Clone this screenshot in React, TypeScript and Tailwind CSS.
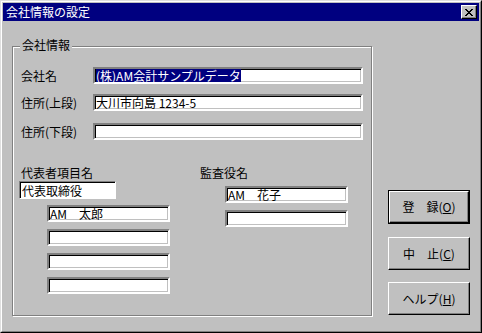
import React from "react";

const font = "font-['Noto_Sans_CJK_JP','Noto_Sans',sans-serif]";

const sunken =
  "bg-white border-2 border-t-[#808080] border-l-[#808080] border-b-white border-r-white shadow-[inset_1px_1px_0_#000,inset_-1px_-1px_0_#c0c0c0]";

function Field({ w, value, selected, className = "" }: { w: string; value?: string; selected?: boolean; className?: string }) {
  return (
    <div className={`${sunken} ${w} h-[17px] flex items-center pl-[1px] overflow-hidden ${className}`}>
      {value && (
        <span className={`text-[12px] leading-[13px] whitespace-nowrap ${selected ? "bg-[#000080] text-white" : "text-black"}`}>
          {value}
        </span>
      )}
    </div>
  );
}

function Row({ label, value, selected, className }: { label: string; value?: string; selected?: boolean; className: string }) {
  return (
    <div className={`flex items-center ${className}`}>
      <span className="w-[72px] text-[12px] leading-[14px] text-black">{label}</span>
      <Field w="w-[270px]" value={value} selected={selected} />
    </div>
  );
}

function Button({ label, hot, def, className }: { label: string; hot: string; def?: boolean; className: string }) {
  return (
    <div className={`w-[82px] ${def ? "h-[34px] border border-black" : "h-[33px]"} ${className}`}>
      <div className="h-full w-full border border-t-white border-l-white border-b-black border-r-black shadow-[inset_-1px_-1px_0_#808080] flex items-center justify-center text-[12px] leading-[14px] text-black">
        <span>
          {label}(<span className="underline underline-offset-1">{hot}</span>)
        </span>
      </div>
    </div>
  );
}

export default function App() {
  return (
    <div className={`w-[482px] h-[333px] bg-[#c0c0c0] ${font} border border-t-[#dfdfdf] border-l-[#dfdfdf] border-b-black border-r-black`}>
      <div className="h-full w-full border border-t-white border-l-white border-b-[#808080] border-r-[#808080] p-[1px] flex flex-col">
        {/* title bar */}
        <div className="h-[18px] bg-[#000080] flex items-center justify-between pl-[3px] pr-[2px]">
          <span className="text-white text-[12px] leading-[14px]">会社情報の設定</span>
          <div className="w-[16px] h-[14px] bg-[#c0c0c0] border border-t-white border-l-white border-b-black border-r-black shadow-[inset_-1px_-1px_0_#808080] flex items-center justify-center">
            <svg width="8" height="7" viewBox="0 0 8 7" shapeRendering="crispEdges">
              <path d="M0 0h2v1h-2zM6 0h2v1h-2zM1 1h2v1h-2zM5 1h2v1h-2zM2 2h4v1h-4zM3 3h2v1h-2zM2 4h4v1h-4zM1 5h2v1h-2zM5 5h2v1h-2zM0 6h2v1h-2zM6 6h2v1h-2z" fill="#000" />
            </svg>
          </div>
        </div>

        {/* body */}
        <div className="flex">
          <div className="relative ml-[9px] mt-[25px] w-[360px] h-[270px] border border-[#808080] shadow-[inset_1px_1px_0_#fff,1px_1px_0_#fff] pl-[8px]">
            <span className="absolute left-[7px] top-[-9px] px-[2px] bg-[#c0c0c0] text-[12px] leading-[14px] text-black">会社情報</span>

            <Row label="会社名" value="(株)AM会計サンプルデータ" selected className="mt-[20px]" />
            <Row label="住所(上段)" value="大川市向島 1234-5" className="mt-[10px]" />
            <Row label="住所(下段)" className="mt-[12px]" />

            <div className="flex mt-[26px]">
              <div className="w-[179px] flex flex-col">
                <span className="text-[12px] leading-[14px] text-black">代表者項目名</span>
                <div className="ml-[-2px] mt-[1px] w-[97px] h-[18px] bg-white border border-t-[#808080] border-l-[#808080] border-b-white border-r-white shadow-[inset_1px_1px_0_#000] flex items-center pl-[2px]">
                  <span className="text-[12px] leading-[13px] text-black">代表取締役</span>
                </div>
                <div className="ml-[26px] mt-[6px] flex flex-col gap-[7px]">
                  <Field w="w-[123px]" value="AM　太郎" />
                  <Field w="w-[123px]" />
                  <Field w="w-[123px]" />
                  <Field w="w-[123px]" />
                </div>
              </div>
              <div className="flex flex-col">
                <span className="text-[12px] leading-[14px] text-black">監査役名</span>
                <div className="ml-[25px] mt-[6px] flex flex-col gap-[7px]">
                  <Field w="w-[123px]" value="AM　花子" />
                  <Field w="w-[123px]" />
                </div>
              </div>
            </div>
          </div>

          <div className="ml-[16px] mt-[169px] flex flex-col">
            <Button label="登　録" hot="O" def className="" />
            <Button label="中　止" hot="C" className="mt-[13px]" />
            <Button label="ヘルプ" hot="H" className="mt-[12px]" />
          </div>
        </div>
      </div>
    </div>
  );
}
